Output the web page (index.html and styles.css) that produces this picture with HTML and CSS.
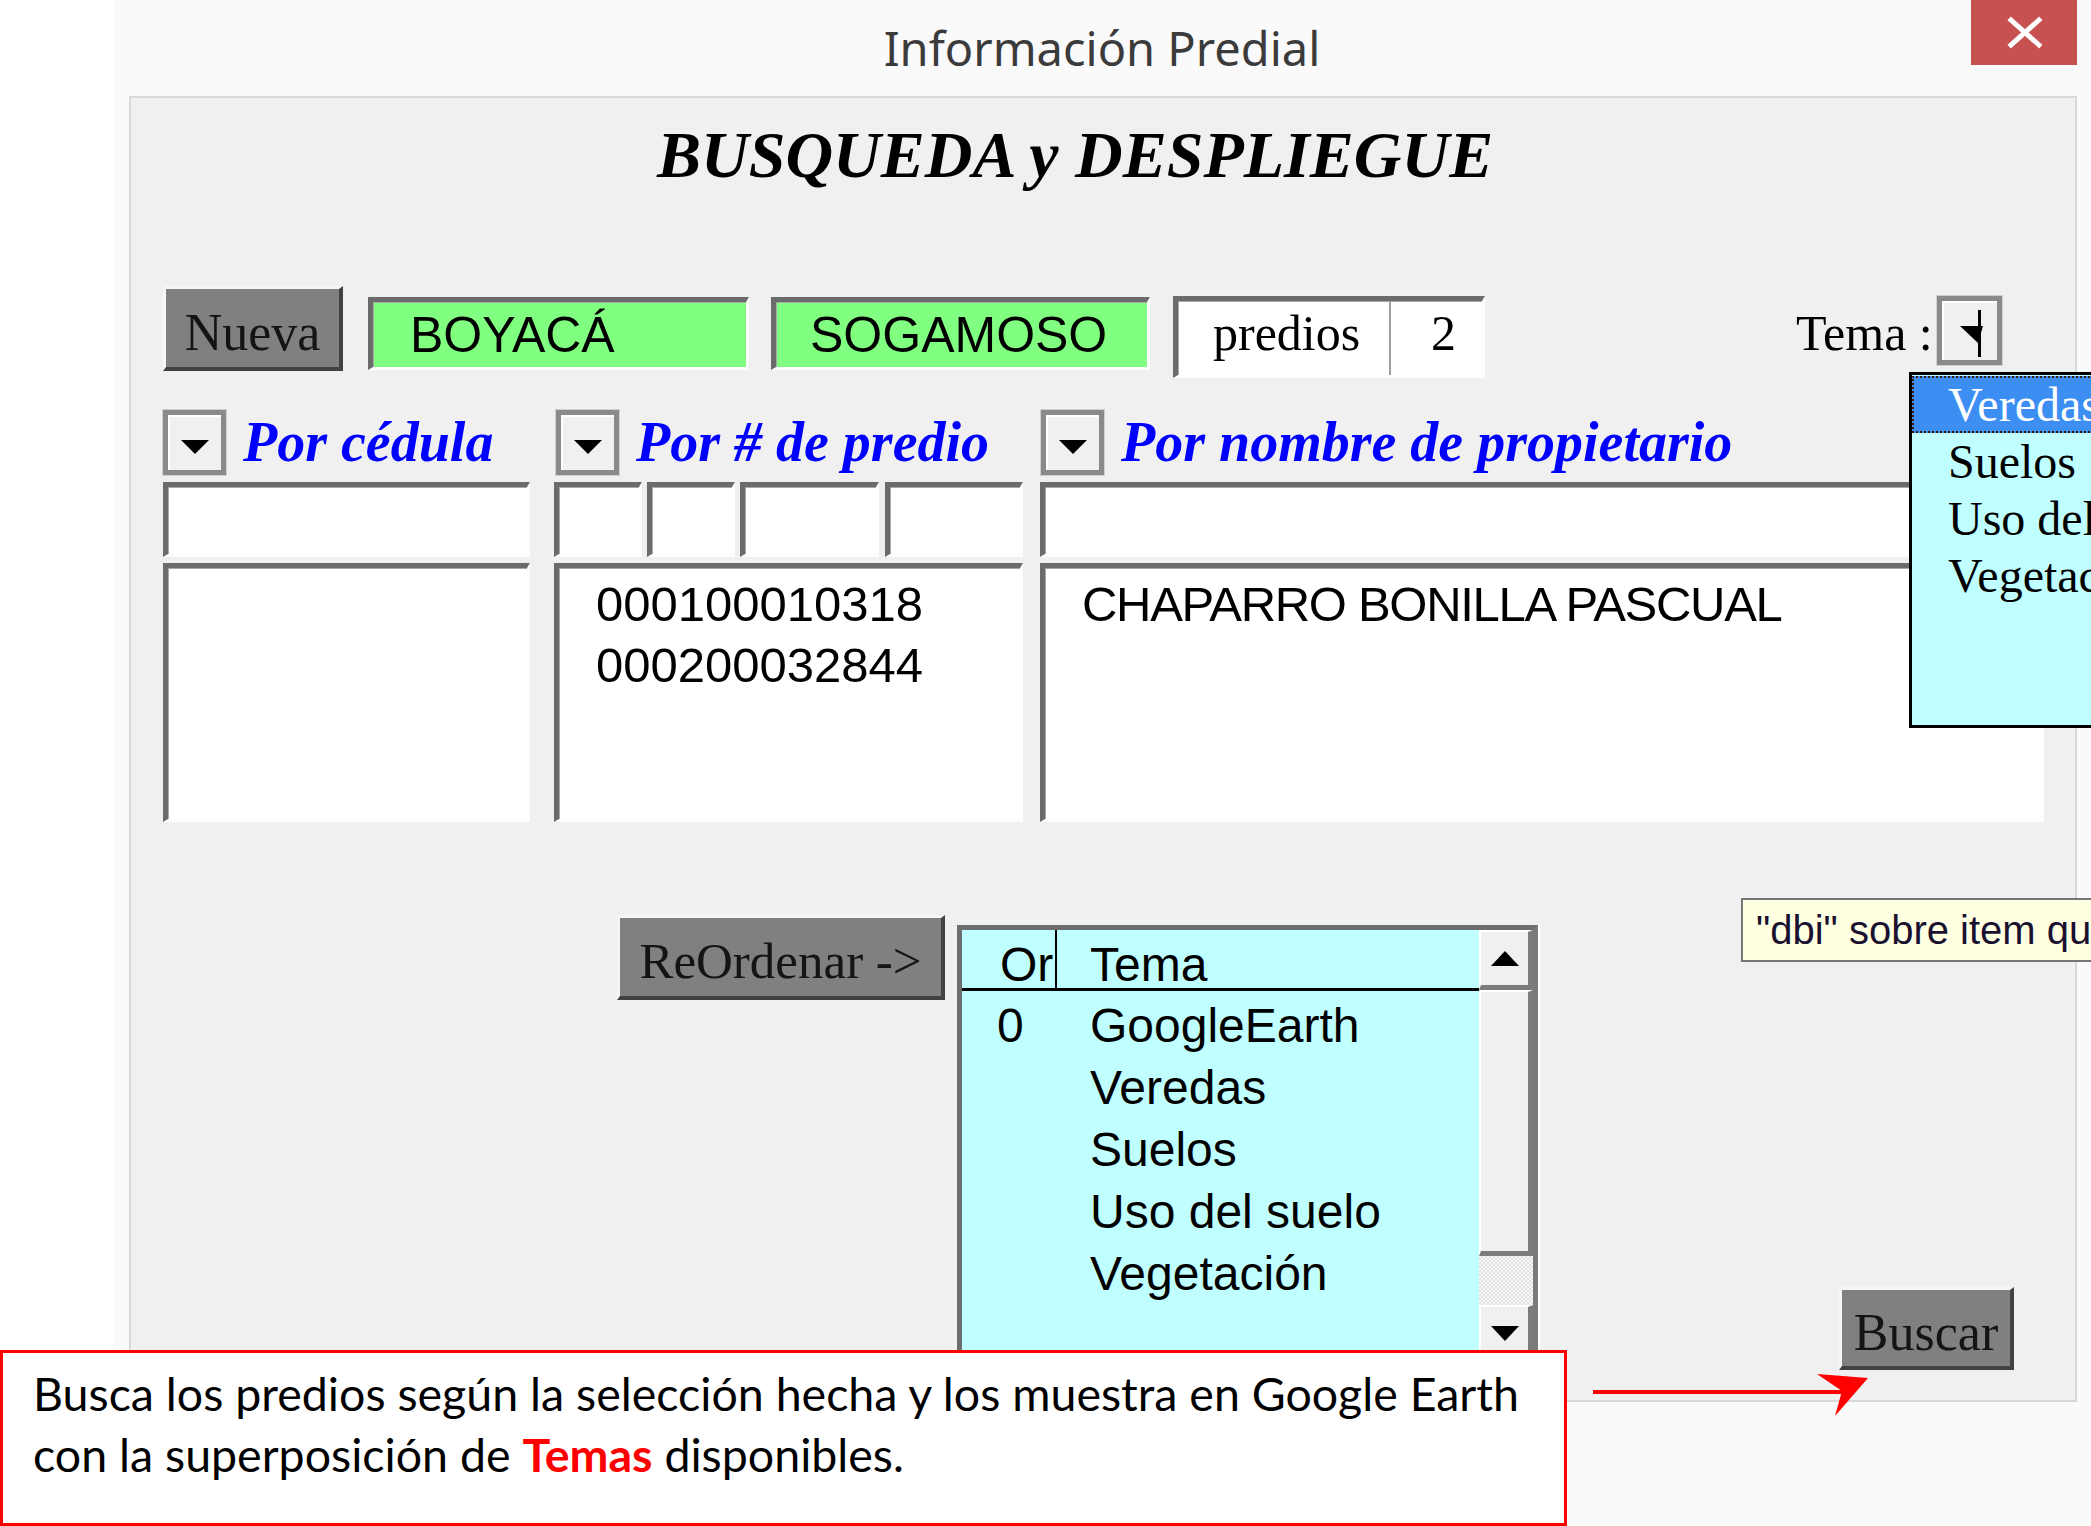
FILE: index.html
```html
<!DOCTYPE html>
<html lang="es">
<head>
<meta charset="utf-8">
<title>Información Predial</title>
<link rel="stylesheet" href="styles.css">
</head>
<body>
<div class="screen">
  <div class="chrome">
    <header class="titlebar">
      <div class="tb-spacer"></div>
      <div class="title">Información Predial</div>
      <div class="tb-right">
        <div class="close">
          <svg width="106" height="65" viewBox="0 0 106 65"><path d="M40 20 L68 45 M68 20 L40 45" stroke="#fff" stroke-width="5" stroke-linecap="square"/></svg>
        </div>
      </div>
    </header>
    <main class="window">
      <h1 class="heading">BUSQUEDA y DESPLIEGUE</h1>
      <div class="row1">
        <div class="btn-gray btn-nueva">Nueva</div>
        <div class="field green f-dep">BOYACÁ</div>
        <div class="field green f-mun">SOGAMOSO</div>
        <div class="field count">
          <div class="count-label">predios</div>
          <div class="count-num">2</div>
        </div>
        <div class="tema-label">Tema :</div>
        <div class="ddbtn tema-btn">
          <svg width="55" height="59" viewBox="0 0 55 59"><polygon points="18,25 41,25 36,42" fill="#000"/><line x1="37.5" y1="9" x2="37.5" y2="56" stroke="#000" stroke-width="3"/></svg>
        </div>
      </div>
      <div class="search">
        <div class="col col-1">
          <div class="col-head">
            <div class="ddbtn"><svg class="tri" width="28" height="14" viewBox="0 0 28 14"><polygon points="0,0 28,0 14,14" fill="#000"/></svg></div>
            <span class="col-label">Por cédula</span>
          </div>
          <div class="inputs"><div class="field white in in-full"></div></div>
          <div class="field white list"></div>
        </div>
        <div class="col col-2">
          <div class="col-head">
            <div class="ddbtn"><svg class="tri" width="28" height="14" viewBox="0 0 28 14"><polygon points="0,0 28,0 14,14" fill="#000"/></svg></div>
            <span class="col-label">Por # de predio</span>
          </div>
          <div class="inputs">
            <div class="field white in in-a"></div>
            <div class="field white in in-b"></div>
            <div class="field white in in-c"></div>
            <div class="field white in in-d"></div>
          </div>
          <div class="field white list list-text">
            <div>000100010318</div>
            <div>000200032844</div>
          </div>
        </div>
        <div class="col col-3">
          <div class="col-head">
            <div class="ddbtn"><svg class="tri" width="28" height="14" viewBox="0 0 28 14"><polygon points="0,0 28,0 14,14" fill="#000"/></svg></div>
            <span class="col-label">Por nombre de propietario</span>
          </div>
          <div class="inputs"><div class="field white in in-full"></div></div>
          <div class="field white list list-text">
            <div class="owner">CHAPARRO BONILLA PASCUAL</div>
          </div>
        </div>
      </div>
      <div class="row5">
        <div class="btn-gray btn-reord">ReOrdenar -&gt;</div>
        <div class="lv">
          <div class="lv-body">
            <div class="lv-head">
              <div class="lv-h1">Or</div>
              <div class="lv-h2">Tema</div>
            </div>
            <div class="lv-rows">
              <div class="lv-row"><div class="lv-c1">0</div><div class="lv-c2">GoogleEarth</div></div>
              <div class="lv-row"><div class="lv-c1"></div><div class="lv-c2">Veredas</div></div>
              <div class="lv-row"><div class="lv-c1"></div><div class="lv-c2">Suelos</div></div>
              <div class="lv-row"><div class="lv-c1"></div><div class="lv-c2">Uso del suelo</div></div>
              <div class="lv-row"><div class="lv-c1"></div><div class="lv-c2">Vegetación</div></div>
            </div>
          </div>
          <div class="sb">
            <div class="sb-btn"><svg width="28" height="15" viewBox="0 0 28 15"><polygon points="14,0 28,15 0,15" fill="#000"/></svg></div>
            <div class="sb-thumb"></div>
            <div class="sb-track"></div>
            <div class="sb-btn"><svg width="28" height="15" viewBox="0 0 28 15"><polygon points="0,0 28,0 14,15" fill="#000"/></svg></div>
          </div>
        </div>
        <div class="btn-gray btn-buscar">Buscar</div>
      </div>
    </main>
  </div>

  <div class="popup">
    <div class="popup-item sel">Veredas</div>
    <div class="popup-item">Suelos</div>
    <div class="popup-item">Uso del suelo</div>
    <div class="popup-item">Vegetación</div>
  </div>

  <div class="tooltip">"dbi" sobre item que desea mover</div>

  <svg class="arrow" width="300" height="70" viewBox="0 0 300 70">
    <line x1="13" y1="32" x2="262" y2="32" stroke="#f00" stroke-width="4"/>
    <polygon points="288,18 237,14 262,31 255,56" fill="#f00"/>
  </svg>

  <div class="caption">Busca los predios según la selección hecha y los muestra en Google Earth<br>con la superposición de <b>Temas</b> disponibles.</div>
</div>
</body>
</html>
```

FILE: styles.css
```css
html, body {
  margin: 0;
  padding: 0;
  background: #fff;
}

.screen {
  position: relative;
  width: 2091px;
  height: 1526px;
  overflow: hidden;
  background: #fff;
}

.chrome {
  margin-left: 113px;
  height: 1526px;
  background: #fafafa;
}

/* ---------- title bar ---------- */
.titlebar {
  display: grid;
  grid-template-columns: 120px 1fr 120px;
  height: 96px;
}

.title {
  text-align: center;
  font-family: "Noto Sans", "Open Sans", sans-serif;
  font-size: 47px;
  line-height: 96px;
  color: #3b3b3b;
}

.tb-right {
  display: flex;
  justify-content: flex-start;
}

.close {
  width: 106px;
  height: 65px;
  background: #c75050;
}

.close svg {
  display: block;
}

/* ---------- window ---------- */
.window {
  display: block;
  margin-left: 16px;
  width: 1948px;
  height: 1306px;
  box-sizing: border-box;
  border: 2px solid #d8d8d8;
  background: #f0f0f0;
  overflow: hidden;
}

.heading {
  margin: 17px 0 0;
  padding-left: 526px;
  font-family: "Liberation Serif", "Times New Roman", serif;
  font-style: italic;
  font-weight: bold;
  font-size: 66px;
  line-height: 80px;
  color: #000;
  white-space: nowrap;
}

/* ---------- shared widgets ---------- */
.btn-gray {
  box-sizing: border-box;
  background: #808080;
  border-style: solid;
  border-width: 3px 4px 4px 3px;
  border-color: #f6f6f6 #424242 #424242 #f6f6f6;
  text-align: center;
  font-family: "Liberation Serif", "Times New Roman", serif;
  color: #141414;
  white-space: nowrap;
}

.field {
  box-sizing: border-box;
  border-style: solid;
  border-width: 5px 3px 3px 5px;
  border-color: #6b6b6b #fdfdfd #fdfdfd #6b6b6b;
  box-shadow: inset 1px 1px 0 #a8a8a8;
}

.field.white {
  background: #fff;
}

.field.green {
  background: #80ff80;
  font-family: "Liberation Sans", Arial, sans-serif;
  font-size: 50px;
  color: #000;
  padding-top: 2px;
  line-height: 63px;
  white-space: nowrap;
}

.ddbtn {
  box-sizing: border-box;
  width: 63px;
  height: 65px;
  border: 5px solid #8a8a8a;
  background: #f0f0f0;
  box-shadow: inset 2px 2px 0 #fff, 0 0 0 1px #d0d0d0;
  display: flex;
  align-items: center;
  justify-content: center;
  flex: none;
}

.ddbtn .tri {
  margin-top: 8px;
}

/* ---------- row 1 ---------- */
.row1 {
  display: flex;
  align-items: flex-start;
  margin-top: 91px;
  padding-left: 32px;
  height: 92px;
}

.btn-nueva {
  width: 180px;
  height: 85px;
  font-size: 52px;
  padding-top: 9px;
  line-height: 69px;
}

.f-dep {
  margin-left: 25px;
  margin-top: 11px;
  width: 381px;
  height: 73px;
  padding-left: 37px;
}

.f-mun {
  margin-left: 22px;
  margin-top: 11px;
  width: 379px;
  height: 73px;
  padding-left: 34px;
}

.count {
  display: flex;
  margin-left: 23px;
  margin-top: 10px;
  height: 82px;
  background: #fff;
  font-family: "Liberation Serif", "Times New Roman", serif;
  font-size: 50px;
  line-height: 64px;
  color: #000;
}

.count-label {
  width: 213px;
  box-sizing: border-box;
  padding-left: 35px;
  border-right: 2px solid #a0a0a0;
}

.count-num {
  width: 91px;
  box-sizing: border-box;
  padding-left: 14px;
  text-align: center;
}

.tema-label {
  margin-left: 311px;
  margin-top: 17px;
  font-family: "Liberation Serif", "Times New Roman", serif;
  font-size: 50px;
  line-height: 60px;
  color: #000;
  white-space: nowrap;
}

.tema-btn {
  width: 65px;
  height: 69px;
  margin-left: 4px;
  margin-top: 10px;
}

/* ---------- search columns ---------- */
.search {
  display: flex;
  margin-top: 32px;
  padding-left: 32px;
}

.col {
  display: flex;
  flex-direction: column;
}

.col-1 { width: 367px; }
.col-2 { width: 469px; margin-left: 24px; }
.col-3 { width: 1004px; margin-left: 17px; }

.col-2 .col-head .ddbtn { margin-left: 2px; }
.col-3 .col-head .ddbtn { margin-left: 1px; }

.col-head {
  display: flex;
  align-items: flex-start;
  height: 65px;
}

.col-label {
  margin-left: 17px;
  font-family: "Liberation Serif", "Times New Roman", serif;
  font-style: italic;
  font-weight: bold;
  font-size: 56px;
  line-height: 65px;
  color: #0000ff;
  white-space: nowrap;
}

.inputs {
  display: flex;
  margin-top: 7px;
  height: 75px;
}

.in { height: 75px; }
.in-full { width: 100%; }
.in-a { width: 88px; }
.in-b { width: 88px; margin-left: 5px; }
.in-c { width: 139px; margin-left: 5px; }
.in-d { width: 138px; margin-left: 6px; }

.list {
  margin-top: 6px;
  height: 259px;
}

.list-text {
  padding: 6px 0 0 37px;
  font-family: "Liberation Sans", Arial, sans-serif;
  font-size: 49px;
  line-height: 61px;
  color: #000;
  white-space: nowrap;
}

.owner {
  letter-spacing: -1.3px;
}

/* ---------- row 5 ---------- */
.row5 {
  display: flex;
  align-items: flex-start;
  margin-top: 93px;
  padding-left: 32px;
}

.btn-reord {
  margin-left: 454px;
  width: 328px;
  height: 85px;
  font-size: 51px;
  padding-top: 8px;
  line-height: 70px;
}

.lv {
  display: flex;
  margin-left: 12px;
  margin-top: 10px;
  width: 581px;
  height: 460px;
  box-sizing: border-box;
  border-style: solid;
  border-width: 5px 5px 3px 5px;
  border-color: #6d6d6d #7a7a7a #cfcfcf #6d6d6d;
  box-shadow: 2px 0 0 #fff;
  background: #c0ffff;
  font-family: "Liberation Sans", Arial, sans-serif;
  font-size: 48px;
  color: #000;
  flex: none;
}

.lv-body {
  flex: 1;
  min-width: 0;
}

.lv-head {
  display: flex;
  height: 61px;
  box-sizing: border-box;
  border-bottom: 3px solid #000;
}

.lv-h1 {
  width: 95px;
  box-sizing: border-box;
  padding: 11px 0 0 38px;
  line-height: 47px;
  border-right: 2px solid #000;
  white-space: nowrap;
}

.lv-h2 {
  padding: 11px 0 0 33px;
  line-height: 47px;
}

.lv-rows {
  padding-top: 4px;
}

.lv-row {
  display: flex;
  height: 62px;
  line-height: 62px;
  white-space: nowrap;
}

.lv-c1 {
  width: 97px;
  box-sizing: border-box;
  padding-left: 35px;
}

.lv-c2 {
  padding-left: 31px;
}

.sb {
  width: 54px;
  display: flex;
  flex-direction: column;
  flex: none;
}

.sb-btn,
.sb-thumb {
  box-sizing: border-box;
  background: #f0f0f0;
  border-style: solid;
  border-width: 2px 5px 5px 2px;
  border-color: #fff #7c7c7c #7c7c7c #fff;
}

.sb-btn {
  height: 60px;
  display: flex;
  align-items: center;
  justify-content: center;
}

.sb-thumb {
  height: 266px;
}

.sb-track {
  height: 49px;
  background: repeating-conic-gradient(#e2e2e2 0 25%, #f7f7f7 0 50%) 0 0 / 4px 4px;
}

.btn-buscar {
  margin-left: 301px;
  margin-top: 372px;
  width: 175px;
  height: 83px;
  font-size: 52px;
  padding-top: 9px;
  line-height: 67px;
}

/* ---------- overlays ---------- */
.popup {
  position: absolute;
  left: 1909px;
  top: 372px;
  width: 260px;
  height: 356px;
  box-sizing: border-box;
  border: 3px solid #000;
  background: #c0ffff;
  padding-top: 1px;
  font-family: "Liberation Serif", "Times New Roman", serif;
  font-size: 48px;
  line-height: 57px;
  color: #000;
}

.popup-item {
  height: 57px;
  padding-left: 36px;
  white-space: nowrap;
}

.popup-item.sel {
  background: #3c8ef3;
  color: #fff;
  outline: 2px dotted #3a1a00;
  outline-offset: -2px;
}

.tooltip {
  position: absolute;
  left: 1741px;
  top: 898px;
  height: 64px;
  box-sizing: border-box;
  border: 2px solid #767676;
  background: #ffffe1;
  padding: 0 14px 0 13px;
  font-family: "Liberation Sans", Arial, sans-serif;
  font-size: 40px;
  line-height: 60px;
  color: #1a1030;
  white-space: nowrap;
}

.arrow {
  position: absolute;
  left: 1580px;
  top: 1360px;
}

.caption {
  position: absolute;
  left: 0;
  top: 1350px;
  width: 1567px;
  height: 176px;
  box-sizing: border-box;
  border: 3px solid #ff0000;
  background: #fff;
  padding: 10px 0 0 30px;
  font-family: Lato, "Open Sans", sans-serif;
  font-size: 46.5px;
  line-height: 61px;
  color: #000;
  white-space: nowrap;
}

.caption b {
  color: #ff0000;
  font-weight: 700;
}
```
